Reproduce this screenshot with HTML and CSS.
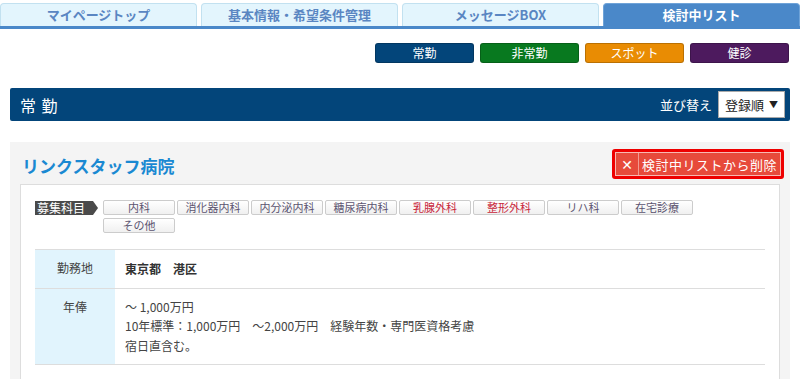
FILE: index.html
```
<!DOCTYPE html>
<html lang="ja">
<head>
  <meta charset="utf-8">
  <title>検討中リスト</title>
  <link rel="stylesheet" href="styles.css">
</head>
<body>
  <ul class="tabs">
    <li class="tab">マイページトップ</li>
    <li class="tab">基本情報・希望条件管理</li>
    <li class="tab">メッセージBOX</li>
    <li class="tab active">検討中リスト</li>
  </ul>

  <div class="kinds">
    <a class="kind navy">常勤</a>
    <a class="kind green">非常勤</a>
    <a class="kind orange">スポット</a>
    <a class="kind purple">健診</a>
  </div>

  <div class="bar">
    <h2 class="bar-title">常 勤</h2>
    <div class="sort">
      <span class="sort-label">並び替え</span>
      <div class="select">登録順 <span class="arrow">▼</span></div>
    </div>
  </div>

  <div class="card">
    <div class="card-head">
      <h3 class="hospital">リンクスタッフ病院</h3>
      <div class="remove-wrap">
        <button class="remove"><span class="x">✕</span><span class="remove-text">検討中リストから削除</span></button>
      </div>
    </div>
    <div class="card-body">
      <div class="subjects">
        <span class="subject-label">募集科目</span>
        <div class="tags">
          <span class="tag">内科</span>
          <span class="tag">消化器内科</span>
          <span class="tag">内分泌内科</span>
          <span class="tag">糖尿病内科</span>
          <span class="tag red">乳腺外科</span>
          <span class="tag red">整形外科</span>
          <span class="tag">リハ科</span>
          <span class="tag">在宅診療</span>
          <span class="tag">その他</span>
        </div>
      </div>
      <table class="info">
        <tr>
          <th>勤務地</th>
          <td class="place">東京都　港区</td>
        </tr>
        <tr>
          <th>年俸</th>
          <td>～ 1,000万円<br>10年標準：1,000万円　～2,000万円　経験年数・専門医資格考慮<br>宿日直含む。</td>
        </tr>
      </table>
    </div>
  </div>
</body>
</html>
```

FILE: styles.css
```
body {
  margin: 0;
  font-family: "Noto Sans CJK JP", "DejaVu Sans", sans-serif;
  color: #333;
  background: #fff;
}

.tabs {
  list-style: none;
  margin: 0;
  padding: 3px 0 0 0;
  display: flex;
  gap: 4px;
  border-bottom: 3px solid #4a88c9;
}
.tab {
  flex: 1;
  height: 22px;
  line-height: 22px;
  text-align: center;
  font-size: 13px;
  font-weight: bold;
  color: #5a86c2;
  background: #e3f5fd;
  border: 1px solid #c2e1f0;
  border-bottom: none;
  border-radius: 4px 4px 0 0;
}
.tab.active {
  background: #4a88c9;
  border-color: #6fa3d8;
  color: #fff;
}

.kinds {
  display: flex;
  justify-content: flex-end;
  gap: 6px;
  padding: 14px 11px 0 0;
}
.kind {
  width: 97px;
  height: 18px;
  line-height: 18px;
  text-align: center;
  font-size: 12px;
  color: #fff;
  border-radius: 3px;
  border: 1px solid rgba(0,0,0,0.2);
}
.navy { background: #03457a; }
.green { background: #08791f; }
.orange { background: #e98c03; }
.purple { background: #4d1a5e; }

.bar {
  margin: 25px 10px 0 10px;
  height: 33px;
  background: #03457a;
  border-radius: 2px;
  display: flex;
  align-items: center;
  justify-content: space-between;
  padding: 0 5px 0 10px;
}
.bar-title {
  margin: 0;
  font-size: 16px;
  font-weight: normal;
  color: #fff;
  letter-spacing: 1px;
}
.sort {
  display: flex;
  align-items: center;
  gap: 6px;
}
.sort-label {
  color: #fff;
  font-size: 13px;
}
.select {
  width: 59px;
  height: 25px;
  line-height: 25px;
  background: #fff;
  border: 1px solid #aaa;
  font-size: 13px;
  color: #222;
  padding-left: 6px;
  position: relative;
}
.arrow {
  position: absolute;
  right: 6px;
  top: 0;
  font-size: 9px;
}

.card {
  margin: 21px 10px 0 10px;
  background: #f4f4f4;
  padding: 6px 10px 0 10px;
}
.card-head {
  display: flex;
  justify-content: space-between;
  align-items: center;
  height: 32px;
  padding-left: 2px;
  margin-bottom: 4px;
}
.hospital {
  margin: 2px 0 0 0;
  font-size: 17px;
  color: #1a89d2;
  font-weight: bold;
}
.remove-wrap {
  border: 3px solid #ee0000;
  border-radius: 3px;
  margin-right: -4px;
}
.remove {
  display: flex;
  align-items: center;
  height: 24px;
  width: 166px;
  padding: 0;
  background: #e74a3b;
  border: 1px solid #f7b9b2;
  color: #fff;
  font-family: inherit;
  font-size: 13px;
}
.x {
  width: 22px;
  height: 22px;
  line-height: 22px;
  font-weight: bold;
  font-size: 14px;
  border-right: 1px solid #f29a90;
}
.remove-text {
  flex: 1;
  letter-spacing: 0.5px;
}

.card-body {
  background: #fff;
  border: 1px solid #ddd;
  padding: 15px 14px 15px 14px;
}
.subjects {
  display: flex;
  align-items: flex-start;
}
.subject-label {
  position: relative;
  margin-top: 1px;
  width: 56px;
  height: 14px;
  line-height: 14px;
  background: #4a4a4a;
  color: #fff;
  font-size: 12px;
  padding-left: 2px;
  margin-right: 10px;
}
.subject-label::after {
  content: "";
  position: absolute;
  right: -5px;
  top: 0;
  border-left: 5px solid #4a4a4a;
  border-top: 7px solid transparent;
  border-bottom: 7px solid transparent;
}
.tags {
  display: flex;
  flex-wrap: wrap;
  gap: 3px 2px;
  width: 600px;
}
.tag {
  width: 70px;
  height: 13px;
  line-height: 13px;
  text-align: center;
  font-size: 11px;
  color: #5c5470;
  background: linear-gradient(#fff, #f0f0f0);
  border: 1px solid #ccc;
  border-radius: 2px;
}
.tag.red { color: #c8253a; }

.info {
  width: 100%;
  margin-top: 16px;
  border-collapse: collapse;
  font-size: 12px;
}
.info th {
  width: 80px;
  background: #e1f4fd;
  font-weight: normal;
  color: #444;
  text-align: center;
  vertical-align: top;
  border-top: 1px solid #ddd;
  border-bottom: 1px solid #ddd;
  padding: 9px 0 0 0;
}
.info td {
  border-top: 1px solid #ddd;
  border-bottom: 1px solid #ddd;
  padding: 8px 10px 9px 10px;
  line-height: 19.5px;
  color: #444;
}
.info td.place {
  font-weight: bold;
  color: #333;
  padding: 9px 10px 9px 10px;
}
.info tr:first-child th,
.info tr:first-child td {
  height: 19px;
}
```
